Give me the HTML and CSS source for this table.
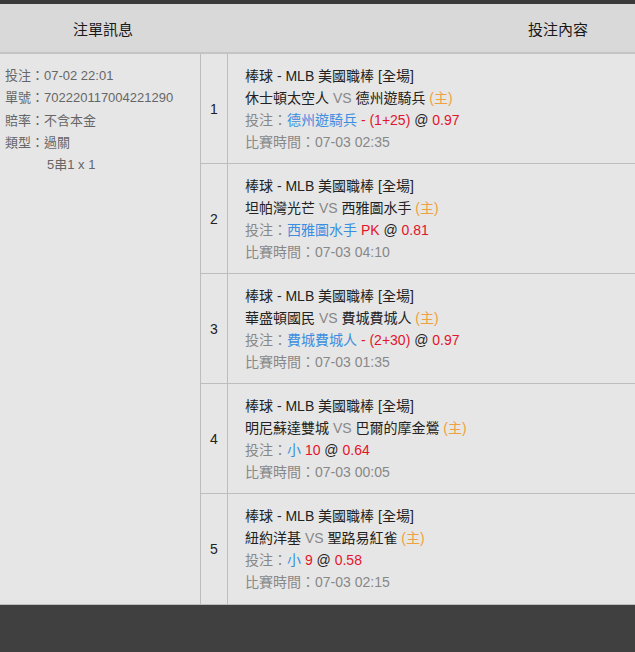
FILE: index.html
```html
<!DOCTYPE html>
<html lang="zh-Hant">
<head>
<meta charset="utf-8">
<link rel="stylesheet" href="styles.css">
</head>
<body>
<div class="page">
  <div class="topbar"></div>
  <div class="head">
    <div class="h-left">注單訊息</div>
    <div class="h-right">投注內容</div>
  </div>
  <div class="grid">
    <div class="info">
      <div>投注：07-02 22:01</div>
      <div>單號：702220117004221290</div>
      <div>賠率：不含本金</div>
      <div>類型：過關</div>
      <div class="indent">5串1 x 1</div>
    </div>

    <div class="num">1</div>
    <div class="det">
      <div class="dark">棒球 - MLB 美國職棒 [全場]</div>
      <div class="dark">休士頓太空人 <span class="gray">VS</span> 德州遊騎兵 <span class="orange">(主)</span></div>
      <div class="gray">投注：<span class="blue">德州遊騎兵</span> <span class="red">- (1+25)</span> <span class="dark">@</span> <span class="red">0.97</span></div>
      <div class="gray">比賽時間：07-03 02:35</div>
    </div>

    <div class="num">2</div>
    <div class="det">
      <div class="dark">棒球 - MLB 美國職棒 [全場]</div>
      <div class="dark">坦帕灣光芒 <span class="gray">VS</span> 西雅圖水手 <span class="orange">(主)</span></div>
      <div class="gray">投注：<span class="blue">西雅圖水手</span> <span class="red">PK</span> <span class="dark">@</span> <span class="red">0.81</span></div>
      <div class="gray">比賽時間：07-03 04:10</div>
    </div>

    <div class="num">3</div>
    <div class="det">
      <div class="dark">棒球 - MLB 美國職棒 [全場]</div>
      <div class="dark">華盛頓國民 <span class="gray">VS</span> 費城費城人 <span class="orange">(主)</span></div>
      <div class="gray">投注：<span class="blue">費城費城人</span> <span class="red">- (2+30)</span> <span class="dark">@</span> <span class="red">0.97</span></div>
      <div class="gray">比賽時間：07-03 01:35</div>
    </div>

    <div class="num">4</div>
    <div class="det">
      <div class="dark">棒球 - MLB 美國職棒 [全場]</div>
      <div class="dark">明尼蘇達雙城 <span class="gray">VS</span> 巴爾的摩金鶯 <span class="orange">(主)</span></div>
      <div class="gray">投注：<span class="blue">小</span> <span class="red">10</span> <span class="dark">@</span> <span class="red">0.64</span></div>
      <div class="gray">比賽時間：07-03 00:05</div>
    </div>

    <div class="num last">5</div>
    <div class="det last">
      <div class="dark">棒球 - MLB 美國職棒 [全場]</div>
      <div class="dark">紐約洋基 <span class="gray">VS</span> 聖路易紅雀 <span class="orange">(主)</span></div>
      <div class="gray">投注：<span class="blue">小</span> <span class="red">9</span> <span class="dark">@</span> <span class="red">0.58</span></div>
      <div class="gray">比賽時間：07-03 02:15</div>
    </div>
  </div>
  <div class="footer"></div>
</div>
</body>
</html>
```

FILE: styles.css
```css
* { box-sizing: border-box; }
html, body {
  margin: 0;
  padding: 0;
  height: 100%;
}
body {
  font-family: "Liberation Sans", Arial, "Noto Sans CJK TC", sans-serif;
  background: #404040;
}
.page {
  display: flex;
  flex-direction: column;
  min-height: 652px;
}
.topbar {
  height: 4px;
  background: #3a3a3a;
}
.head {
  display: flex;
  height: 50px;
  background: #d9d9d9;
  border-bottom: 2px solid #c4c4c4;
  align-items: center;
  font-size: 15px;
  color: #1a1a1a;
}
.h-left {
  width: 206px;
  text-align: center;
}
.h-right {
  flex: 1;
  text-align: right;
  padding-right: 47px;
}
.grid {
  display: grid;
  grid-template-columns: 201px 27px 1fr;
  background: #e6e6e6;
  border-bottom: 1px solid #bdbdbd;
}
.info {
  grid-row: 1 / span 5;
  grid-column: 1;
  border-right: 1px solid #bdbdbd;
  padding: 11px 0 0 5px;
  font-size: 13px;
  line-height: 22.3px;
  color: #666;
}
.indent { padding-left: 42px; }
.num {
  grid-column: 2;
  border-right: 1px solid #bdbdbd;
  border-bottom: 1px solid #bdbdbd;
  display: flex;
  align-items: center;
  justify-content: center;
  font-size: 14px;
  color: #222;
  height: 110px;
}
.det {
  grid-column: 3;
  border-bottom: 1px solid #bdbdbd;
  padding: 11px 0 0 17px;
  font-size: 14px;
  line-height: 22px;
  height: 110px;
}
.num.last, .det.last { border-bottom: none; }
.dark { color: #222; }
.gray { color: #888; }
.blue { color: #3a8ee0; }
.red { color: #e3142b; }
.orange { color: #f0a040; }
.footer {
  flex: 1;
  background: #404040;
}
```
